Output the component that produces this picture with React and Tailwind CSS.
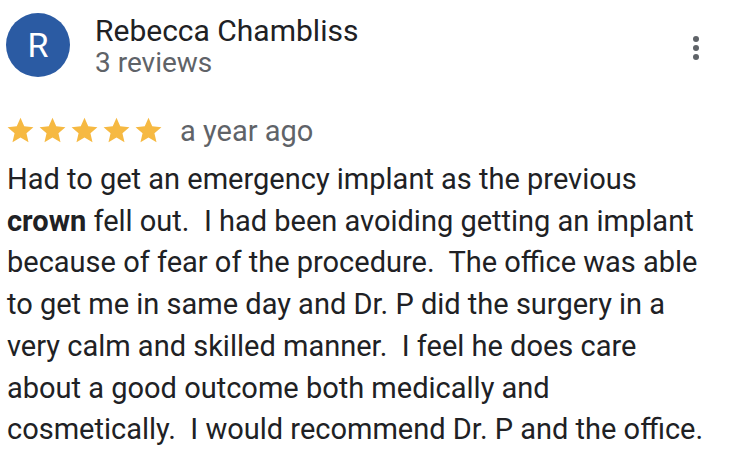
import React from 'react';

const Star = () => (
  <svg width="31" height="31" viewBox="0 0 24 24" className="shrink-0">
    <path
      fill="#f6b942"
      d="M12 2.2l2.9 6.6 7.1.6-5.4 4.7 1.6 7-6.2-3.7-6.2 3.7 1.6-7L2 9.4l7.1-.6z"
    />
  </svg>
);

export default function App() {
  return (
    <div className="w-[750px] h-[470px] bg-white overflow-hidden font-['Roboto',sans-serif]">
      {/* Header */}
      <div className="flex items-start pl-[6px] pt-[13px] pr-[51px]">
        <div className="w-16 h-16 rounded-full bg-[#2b5ba3] flex items-center justify-center text-white text-[34px] leading-none">
          R
        </div>
        <div className="ml-[25px] flex-1">
          <div className="text-[30px] leading-[34px] text-[#202124] mt-[1px]">Rebecca Chambliss</div>
          <div className="text-[28px] leading-[30px] text-[#5f6368]">3 reviews</div>
        </div>
        <div className="mt-[23px] flex flex-col gap-[3px] items-center">
          <span className="w-[6px] h-[6px] rounded-full bg-[#5f6368]" />
          <span className="w-[6px] h-[6px] rounded-full bg-[#5f6368]" />
          <span className="w-[6px] h-[6px] rounded-full bg-[#5f6368]" />
        </div>
      </div>

      {/* Rating */}
      <div className="flex items-center pl-[5px] mt-[37px]">
        <div className="flex gap-[1px]">
          <Star />
          <Star />
          <Star />
          <Star />
          <Star />
        </div>
        <span className="ml-[16px] text-[29px] leading-[30px] text-[#5f6368]">a year ago</span>
      </div>

      {/* Review body */}
      <div className="pl-[7px] mt-[13px] text-[29px] leading-[41.7px] text-[#202124] whitespace-pre">
        <div>Had to get an emergency implant as the previous</div>
        <div>
          <span className="font-bold">crown</span>{' fell out.  I had been avoiding getting an implant'}
        </div>
        <div>because of fear of the procedure.  The office was able</div>
        <div>to get me in same day and Dr. P did the surgery in a</div>
        <div>very calm and skilled manner.  I feel he does care</div>
        <div>about a good outcome both medically and</div>
        <div>cosmetically.  I would recommend Dr. P and the office.</div>
      </div>
    </div>
  );
}
